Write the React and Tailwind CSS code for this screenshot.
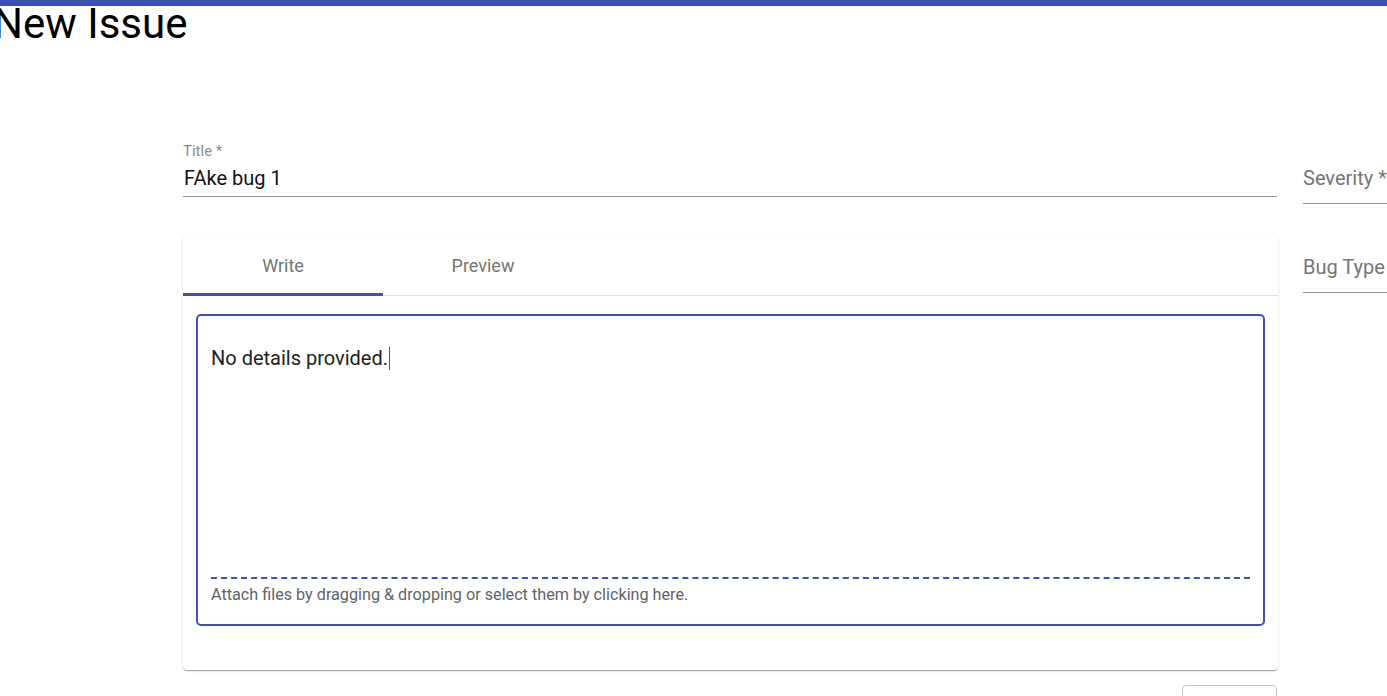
export default function App() {
  return (
    <div className="relative min-h-[696px] w-full overflow-hidden bg-white font-['Roboto',sans-serif] text-black">
      {/* app bar strip */}
      <div className="absolute left-0 right-0 top-0 z-10 h-[6px] bg-[#3f51b5]" />

      <h1 className="ml-[-7px] text-[42px] font-normal leading-[48px]">New Issue</h1>

      <div className="mt-[96px] flex gap-[25px] pl-[183px]">
        <div className="w-[1095px] shrink-0">
          <div className="w-[1094px]">
            <label className="block text-[15px] leading-[15px] text-[#8c8c8c]">Title *</label>
            <div className="mt-[7px] border-b border-[#949494] pb-[6px] pl-px text-[20px] leading-[24px] text-[#111]">FAke bug 1</div>
          </div>

          <div className="mt-[39px] h-[434px] rounded-[4px] bg-white shadow-[0_2px_1px_-1px_rgba(0,0,0,0.2),0_1px_1px_0_rgba(0,0,0,0.14),0_1px_3px_0_rgba(0,0,0,0.12)]">
            <div className="flex h-[60px] border-b border-[#e0e0e0]">
              <div className="relative flex w-[200px] items-center justify-center text-[18px] text-[#757575]">
                Write
                <span className="absolute bottom-[-1px] left-0 right-0 h-[3px] bg-[#3f51b5]" />
              </div>
              <div className="flex w-[200px] items-center justify-center text-[18px] text-[#757575]">Preview</div>
            </div>

            <div className="mx-[13px] mt-[18px] flex h-[312px] flex-col rounded-[5px] border-2 border-[#3f51b5] px-[13px] pt-[26px] pb-[19px]">
              <div className="flex-1 text-[20px] leading-[24px] text-[#212121]">
                No details provided.
                <span className="ml-px inline-block h-[23px] w-px translate-y-[5px] bg-[#3f51b5]" />
              </div>
              <div className="border-t-2 border-dashed border-[#3f51b5]" />
              <p className="mt-[6px] text-[16.2px] leading-[20px] text-[#5f6368]">Attach files by dragging &amp; dropping or select them by clicking here.</p>
            </div>
          </div>

          <div className="mt-[15px] flex justify-end pr-px">
            <button className="h-[36px] w-[95px] rounded-[4px] border border-[#c4c4c4] bg-white" />
          </div>
        </div>

        <div className="w-[300px] shrink-0">
          <div className="mt-[22px] border-b border-[#949494] pb-[13px] text-[20px] leading-[24px] text-[#757575]">Severity *</div>
          <div className="mt-[51px] border-b border-[#949494] pb-[13px] text-[20px] leading-[24px] text-[#757575]">Bug Type</div>
        </div>
      </div>
    </div>
  );
}
